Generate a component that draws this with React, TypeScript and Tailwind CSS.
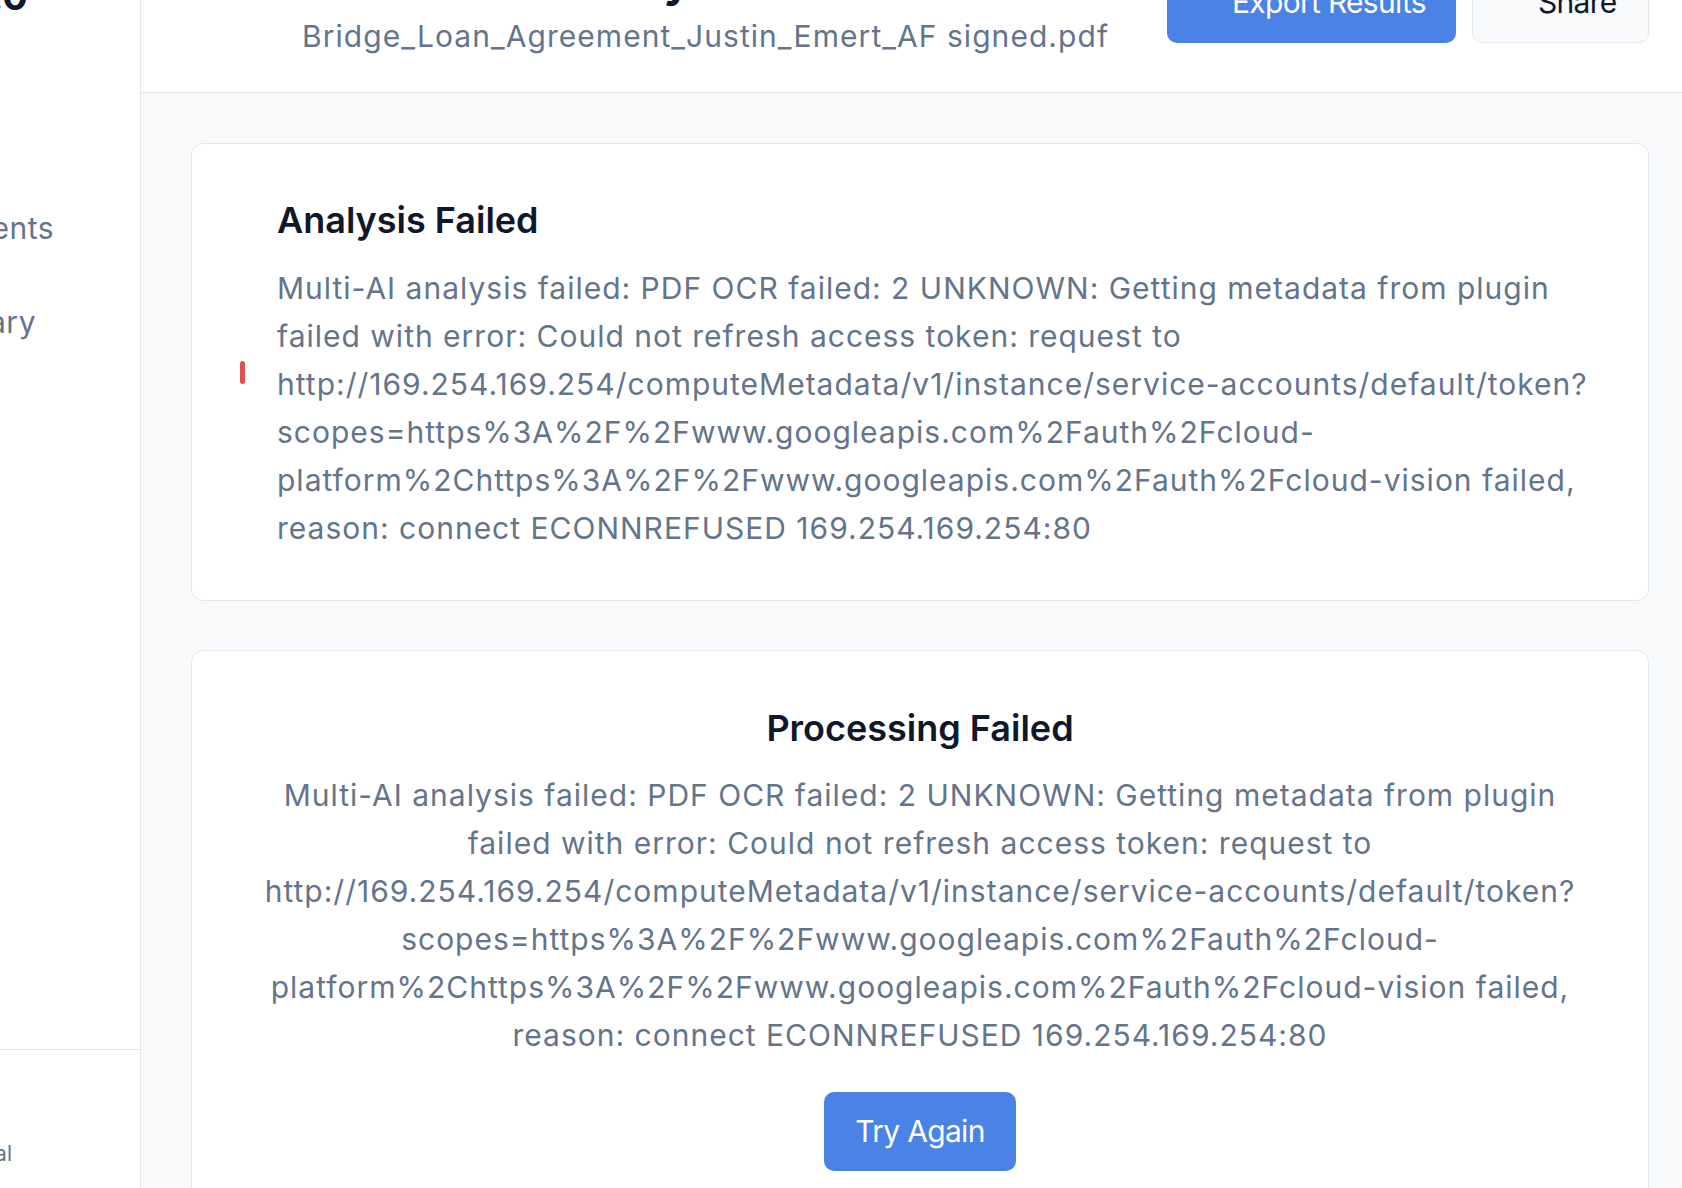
import React from 'react';

const errorText =
  'Multi-AI analysis failed: PDF OCR failed: 2 UNKNOWN: Getting metadata from plugin failed with error: Could not refresh access token: request to http://169.254.169.254/computeMetadata/v1/instance/service-accounts/default/token?scopes=https%3A%2F%2Fwww.googleapis.com%2Fauth%2Fcloud-platform%2Chttps%3A%2F%2Fwww.googleapis.com%2Fauth%2Fcloud-vision failed, reason: connect ECONNREFUSED 169.254.169.254:80';

function Sidebar() {
  return (
    <aside className="w-[141px] shrink-0 bg-white border-r border-[#e2e8f0] flex flex-col overflow-hidden">
      <div className="pt-[56px] flex justify-end pr-[112px]">
        <span className="text-[38px] leading-[40px] font-bold text-[#0f172a] whitespace-nowrap">DocuLens 2.0</span>
      </div>

      <nav className="mt-[165px] flex flex-col">
        <div className="py-[23px] flex justify-end pr-[86px]">
          <span className="text-[30px] leading-[48px] tracking-[0.5px] text-[#64748b] whitespace-nowrap">Documents</span>
        </div>
        <div className="py-[23px] flex justify-end pr-[104px]">
          <span className="text-[30px] leading-[48px] tracking-[0.5px] text-[#64748b] whitespace-nowrap">Library</span>
        </div>
      </nav>

      <div className="flex-1" />

      <div className="border-t border-[#e2e8f0] pt-[89px] pb-[19px] flex justify-end pr-[128px]">
        <span className="text-[21px] leading-[30px] text-[#64748b] whitespace-nowrap">Legal</span>
      </div>
    </aside>
  );
}

function Header() {
  return (
    <header className="bg-white border-b border-[#e2e8f0] pt-[34px] pb-[32px] pl-[161px] pr-[33px] flex items-start justify-between">
      <div>
        <h1 className="text-[45px] leading-[54px] font-bold tracking-[1.8px] text-[#0f172a]">Document Analysis</h1>
        <p className="mt-[4px] text-[30px] leading-[48px] tracking-[1.05px] text-[#64748b] whitespace-nowrap">
          Bridge_Loan_Agreement_Justin_Emert_AF signed.pdf
        </p>
      </div>
      <div className="mt-[8px] flex gap-4">
        <button className="w-[289px] text-left bg-[#4a82e5] text-white text-[30px] leading-[45px] tracking-[-0.7px] rounded-[10px] pl-[65px] py-[18px] whitespace-nowrap">
          Export Results
        </button>
        <button className="w-[177px] text-left bg-[#f8fafc] border border-[#e2e8f0] text-[#0f172a] text-[30px] leading-[45px] tracking-[-0.7px] rounded-[10px] pl-[65px] py-[17px] whitespace-nowrap">
          Share
        </button>
      </div>
    </header>
  );
}

export default function App() {
  return (
    <div className="h-[1188px] overflow-hidden bg-[#f8fafc] font-[Inter,sans-serif]">
      <div className="flex h-[1268px] -mt-[80px]">
        <Sidebar />
        <main className="flex-1 flex flex-col overflow-hidden">
          <Header />
          <div className="flex-1 bg-[#f8fafc] pt-[50px] pl-[50px] pr-[33px]">
            <section className="bg-white border border-[#e2e8f0] rounded-xl p-[48px] flex items-center gap-8 mb-[49px]">
              <div className="w-[5px] h-[23px] rounded-full bg-[#e0524f] shrink-0" />
              <div>
                <h2 className="pt-[1px] text-[36px] leading-[54px] font-semibold text-[#0f172a] mb-[17px]">Analysis Failed</h2>
                <p className="text-[30px] leading-[48px] tracking-[1px] text-[#64748b]">{errorText}</p>
              </div>
            </section>

            <section className="bg-white border border-[#e2e8f0] rounded-xl p-[48px] text-center">
              <h2 className="pt-[2px] text-[36px] leading-[54px] font-semibold text-[#0f172a] mb-[16px]">Processing Failed</h2>
              <p className="text-[30px] leading-[48px] tracking-[1px] text-[#64748b]">{errorText}</p>
              <button className="mt-[33px] w-[192px] bg-[#4a82e5] text-white text-[30px] leading-[45px] tracking-[-0.7px] rounded-[10px] py-[17px]">
                Try Again
              </button>
            </section>
          </div>
        </main>
      </div>
    </div>
  );
}
